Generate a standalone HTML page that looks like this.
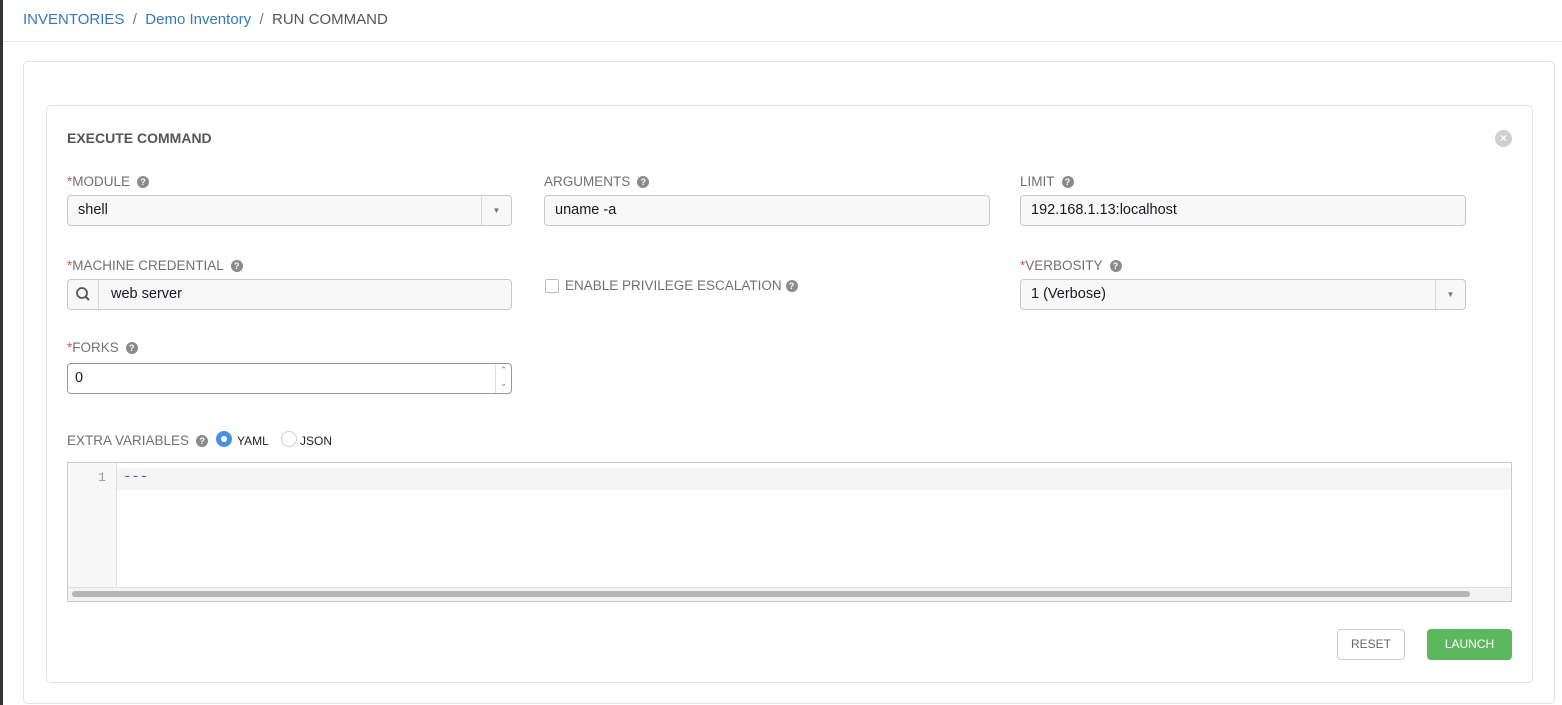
<!DOCTYPE html>
<html><head><style>
*{box-sizing:border-box;margin:0;padding:0}
body{width:1562px;height:705px;background:#fff;font-family:"Liberation Sans",sans-serif;position:relative;overflow:hidden;color:#161b1f}
.a{position:absolute}
.lbl{position:absolute;font-size:13.5px;color:#707070;letter-spacing:0}
.req{color:#d9534f}
.q{display:inline-block;width:12px;height:12px;border-radius:50%;background:#8b8b8b;color:#fff;font-size:9px;font-weight:bold;text-align:center;line-height:12px;margin-left:7px;vertical-align:1px}
.inp{position:absolute;border:1px solid #c8c8c8;border-radius:4px;background:#f8f8f8;height:31px;font-size:14.5px;line-height:29px;padding-left:10px;color:#161b1f}
.caret{position:absolute;right:0;top:0;width:30px;height:29px;border-left:1px solid #d7d7d7;text-align:center;font-size:8px;color:#777}
</style></head><body>
<div class="a" style="left:0;top:0;width:3px;height:705px;background:#333"></div>
<div class="a" style="left:23px;top:11px;font-size:15px;color:#337ab7">INVENTORIES <span style="color:#777">&nbsp;/&nbsp;</span> Demo Inventory <span style="color:#777">&nbsp;/&nbsp;</span> <span style="color:#555">RUN COMMAND</span></div>
<div class="a" style="left:3px;top:41px;width:1559px;height:1px;background:#e6e6e6"></div>
<div class="a" style="left:23px;top:61px;width:1532px;height:643px;border:1px solid #e2e2e2;border-radius:5px"></div>
<div class="a" style="left:46px;top:105px;width:1487px;height:578px;border:1px solid #e2e2e2;border-radius:5px"></div>
<div class="a" style="left:67px;top:130px;font-size:14px;font-weight:bold;color:#555">EXECUTE COMMAND</div>
<div class="a" style="left:1495px;top:130px;width:17px;height:17px;border-radius:50%;background:#d0d0d0;color:#fff;font-size:12px;font-weight:bold;text-align:center;line-height:17px">×</div>

<div class="lbl" style="left:67px;top:174px"><span class="req">*</span>MODULE<span class="q">?</span></div>
<div class="inp" style="left:67px;top:195px;width:445px">shell<div class="caret">▼</div></div>
<div class="lbl" style="left:544px;top:174px">ARGUMENTS<span class="q">?</span></div>
<div class="inp" style="left:544px;top:195px;width:446px">uname -a</div>
<div class="lbl" style="left:1020px;top:174px">LIMIT<span class="q">?</span></div>
<div class="inp" style="left:1020px;top:195px;width:446px">192.168.1.13:localhost</div>

<div class="lbl" style="left:67px;top:258px"><span class="req">*</span>MACHINE CREDENTIAL<span class="q">?</span></div>
<div class="inp" style="left:67px;top:279px;width:445px;padding-left:43px">web server
<div class="a" style="left:0;top:0;width:31px;height:29px;border-right:1px solid #d7d7d7">
<svg width="31" height="29"><circle cx="14" cy="13" r="5" fill="none" stroke="#555" stroke-width="1.8"/><line x1="17.5" y1="16.5" x2="21" y2="20" stroke="#555" stroke-width="2"/></svg></div></div>
<div class="a" style="left:545px;top:279px;width:14px;height:14px;border:1px solid #bbb;border-radius:2px;background:#fff"></div>
<div class="lbl" style="left:565px;top:278px">ENABLE PRIVILEGE ESCALATION<span class="q" style="margin-left:4px">?</span></div>
<div class="lbl" style="left:1020px;top:258px"><span class="req">*</span>VERBOSITY<span class="q">?</span></div>
<div class="inp" style="left:1020px;top:279px;width:446px">1 (Verbose)<div class="caret">▼</div></div>

<div class="lbl" style="left:67px;top:340px"><span class="req">*</span>FORKS<span class="q">?</span></div>
<div class="inp" style="left:67px;top:363px;width:445px;background:#fff;border-color:#999;padding-left:7px">0<div class="a" style="right:0;top:0;width:16px;height:29px;border-left:1px solid #ddd;font-size:9px;line-height:13px;text-align:center;color:#888">⌃<br>⌄</div></div>

<div class="lbl" style="left:67px;top:433px">EXTRA VARIABLES<span class="q">?</span></div>
<div class="a" style="left:216px;top:431px;width:16px;height:16px;border-radius:50%;background:#4a90e2"><div class="a" style="left:5px;top:5px;width:6px;height:6px;border-radius:50%;background:#fff"></div></div>
<div class="a" style="left:237px;top:434px;font-size:12px;color:#222">YAML</div>
<div class="a" style="left:281px;top:431px;width:16px;height:16px;border-radius:50%;border:1px solid #ccc"></div>
<div class="a" style="left:300px;top:434px;font-size:12px;color:#222">JSON</div>

<div class="a" style="left:67px;top:462px;width:1445px;height:140px;border:1px solid #ccc">
<div class="a" style="left:0;top:0;width:49px;height:124px;background:#f7f7f7;border-right:1px solid #ddd"></div>
<div class="a" style="left:49px;top:5px;width:1394px;height:22px;background:#f5f5f5"></div>
<div class="a" style="left:30px;top:7px;font-family:'Liberation Mono',monospace;font-size:13px;color:#999">1</div>
<div class="a" style="left:55px;top:6px;font-family:'Liberation Mono',monospace;font-size:14px;color:#5b45c9">---</div>
<div class="a" style="left:0;top:124px;width:1443px;height:14px;background:#f3f3f3;border-top:1px solid #ddd"></div>
<div class="a" style="left:4px;top:128px;width:1398px;height:6px;border-radius:3px;background:#b5b5b8"></div>
</div>

<div class="a" style="left:1337px;top:629px;width:68px;height:31px;border:1px solid #ccc;border-radius:4px;font-size:12px;color:#666;text-align:center;line-height:29px">RESET</div>
<div class="a" style="left:1427px;top:629px;width:85px;height:31px;border-radius:4px;background:#5cb85c;font-size:12px;color:#fff;text-align:center;line-height:31px">LAUNCH</div>
</body></html>
